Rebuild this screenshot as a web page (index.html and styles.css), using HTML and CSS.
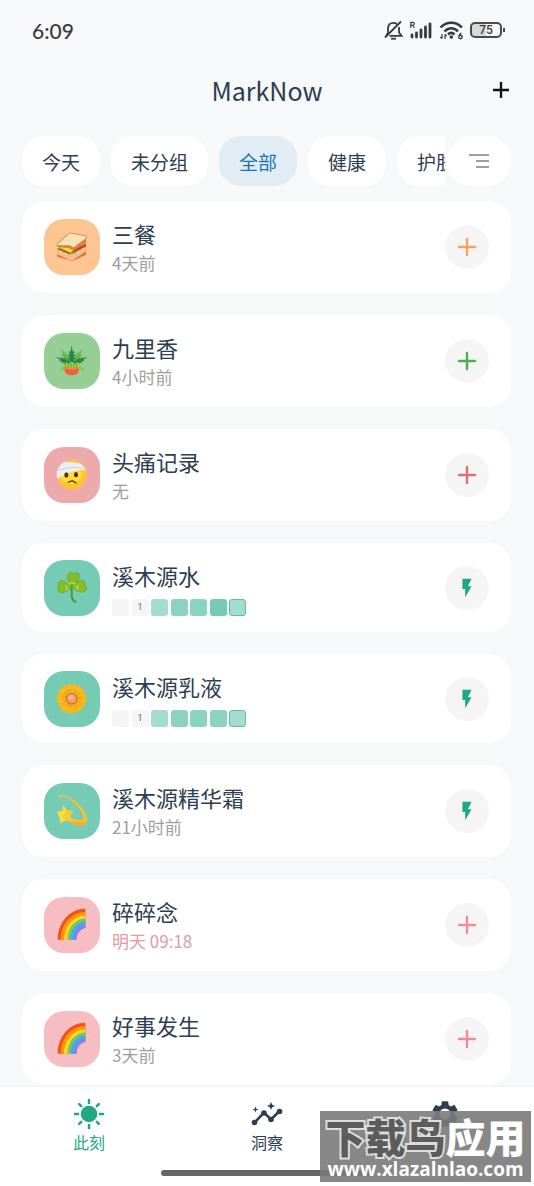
FILE: index.html
```
<!DOCTYPE html>
<html lang="zh-CN">
<head>
    <meta charset="UTF-8">
    <meta name="viewport" content="width=device-width, initial-scale=1">
    <title>MarkNow</title>
    <link rel="stylesheet" href="styles.css">
</head>
<body>
    <!-- shared icons -->
    <svg class="sprite" aria-hidden="true">
        <symbol id="plus" viewBox="0 0 22 22">
            <path d="M11 3v16M3 11h16" stroke="currentColor" stroke-width="2.4" stroke-linecap="round"/>
        </symbol>
        <symbol id="bolt" viewBox="0 0 24 24">
            <path d="M7 2v11h3v9l7-12h-4l4-8z" fill="currentColor"/>
        </symbol>
        <symbol id="rainbow" viewBox="0 0 168 168">
            <path d="M41 128A83 91 0 0 1 124 35v57A32 36 0 0 0 97 128z" fill="#f4511e"/>
            <path d="M50 128A74 82 0 0 1 124 45v47A32 36 0 0 0 97 128z" fill="#ff9800"/>
            <path d="M60 128A64 73 0 0 1 124 55v37A32 36 0 0 0 97 128z" fill="#fdd835"/>
            <path d="M70 128A54 64 0 0 1 124 64v28A32 36 0 0 0 97 128z" fill="#8bc34a"/>
            <path d="M79 128A45 55 0 0 1 124 73v19A32 36 0 0 0 97 128z" fill="#29b6f6"/>
            <path d="M88 128A36 46 0 0 1 124 82v9A32 36 0 0 0 97 128z" fill="#8e7cf0"/>
        </symbol>
    </svg>

    <div class="app">
        <header>
            <div class="status-bar">
                <span class="time">6:09</span>
                <div class="status-icons">
                    <svg width="19" height="20" viewBox="0 0 19 20" fill="none" stroke="#3a3a3a" stroke-width="1.8">
                        <path d="M4 13V8.500C4 5 6 2.800 9.300 2.800c1.500 0 2.600.4 3.500 1.200M15 7v5.500l2.500 3.300H5.500M4 13l-2 2.800M17 1.500L1 17.500"/>
                        <path d="M7 18.700h5"/>
                    </svg>
                    <svg width="24" height="20" viewBox="0 0 24 20">
                        <path d="M1.800 8V2.300h2a1.500 1.500 0 0 1 0 3h-2M3.800 5.300L5.500 8" fill="none" stroke="#3a3a3a" stroke-width="1.200"/>
                        <path d="M3 15v2M7.500 13v4M12 10v7M16.500 7v10M21 4v13" stroke="#3a3a3a" stroke-width="2.800" stroke-linecap="round"/>
                    </svg>
                    <svg width="25" height="20" viewBox="0 0 25 20" fill="none" stroke="#3a3a3a">
                        <path d="M1.500 7.500C7.500 1 17 1 23 7.500M5.500 11.500c4-4.300 9.500-4.300 13.500 0M9 14.500c2-2 4.500-2 6.500 0" stroke-width="2.500"/>
                        <circle cx="12.300" cy="17" r="1.800" fill="#3a3a3a" stroke="none"/>
                        <path d="M3 14v4.500M1.300 17L3 18.700M6 19v-4.500M6 14.500L7.700 16" stroke-width="1.200"/>
                        <path d="M22 13l-2 3" stroke-width="1.400"/>
                        <circle cx="21.500" cy="17" r="1.700" stroke-width="1.400"/>
                    </svg>
                    <div class="battery"><span>75</span></div>
                </div>
            </div>
            <div class="title-bar">
                <h1>MarkNow</h1>
                <button class="add" aria-label="新建">
                    <svg width="18" height="18" viewBox="0 0 18 18"><path d="M9 1v16M1 9h16" stroke="#111" stroke-width="2.300"/></svg>
                </button>
            </div>
            <div class="filters">
                <div class="chips">
                    <button class="chip">今天</button>
                    <button class="chip">未分组</button>
                    <button class="chip active">全部</button>
                    <button class="chip">健康</button>
                    <button class="chip">护肤</button>
                </div>
                <button class="menu" aria-label="分组列表">
                    <svg width="22" height="16" viewBox="0 0 22 16"><path d="M1 2h20M8 8h13M8 14h13" stroke="#9e9e9e" stroke-width="1.800"/></svg>
                </button>
            </div>
        </header>

        <main>
            <article class="card orange">
                <div class="icon">
                    <svg viewBox="0 0 168 168">
                        <path d="M39 106l34 15c5 4 12 4 17 0l36-24v10l-34 16c-7 3-15 3-20-1l-32-9z" fill="#d9772b"/>
                        <path d="M40 99l35 15 52-26v8l-37 22c-6 3-11 3-15 0l-35-12z" fill="#f5b8a0"/>
                        <path d="M37 89l7 6 7 0 8 8 8-2 8 9 9-5 9 1 9-10 8-1 7-8 9-1v-12l-30 12-50-2z" fill="#9bcb35"/>
                        <path d="M42 87l33 13 51-26v8l-35 18-17 4-31-13z" fill="#cc3829"/>
                        <path d="M50 84l30 17 18-15 27-13v-7l-48 14z" fill="#ffdb46"/>
                        <path d="M38 76c5-7 26-25 34-32 3-3 7-3 11-2l42 7c5 2 5 8 1 11l1 12-32 18c-4 5-9 5-13 2-4-4-9-5-14-5l-28-4z" fill="#d8813b"/>
                        <path d="M40 76c6-6 26-23 34-31 2-2 5-2 9-1l41 7c4 2 2 6-1 8L94 82c-3 4-7 4-11 0-5-4-10-3-15-3l-24 0z" fill="#fce2b5"/>
                    </svg>
                </div>
                <div class="info">
                    <h2>三餐</h2>
                    <p>4天前</p>
                </div>
                <button class="action" aria-label="记录三餐"><svg><use href="#plus"/></svg></button>
            </article>

            <article class="card green">
                <div class="icon">
                    <svg viewBox="0 0 168 168">
                        <defs>
                            <path id="frond" d="M83 100L80 88L72 88L78 81L70 76L78 73L71 66L79 64L73 56L80 55L83 36L86 55L93 56L87 64L95 66L88 73L96 76L88 81L94 88L86 88z"/>
                        </defs>
                        <g fill="#65b847">
                            <use href="#frond" transform="rotate(-32 83 100)"/>
                            <use href="#frond" transform="rotate(32 83 100)"/>
                            <path d="M70 92q-18 2-24 25l12-7 14-11zM96 92q20 2 28 25l-13-7-14-11z" fill="#83c955"/>
                        </g>
                        <g fill="#24864e">
                            <use href="#frond" transform="translate(-2 -4) rotate(-62 83 100) translate(16 18) scale(.82)"/>
                            <use href="#frond" transform="translate(2 -4) rotate(62 83 100) translate(14 18) scale(.82)"/>
                            <use href="#frond"/>
                        </g>
                        <path d="M57 98l8-10 9 4 9-6 9 6 10-4 8 10-7 12H62z" fill="#a6cf45"/>
                        <path d="M65 92v13M73 91v16M81 90v17M89 91v16M98 92v14" stroke="#447b33" stroke-width="2"/>
                        <path d="M60 103q23 8 46 0l-3 15q-6 9-20 9t-20-9z" fill="#ef6037"/>
                        <path d="M61 105q22 7 44 0" stroke="#ff8758" stroke-width="3" fill="none"/>
                    </svg>
                </div>
                <div class="info">
                    <h2>九里香</h2>
                    <p>4小时前</p>
                </div>
                <button class="action" aria-label="记录九里香"><svg><use href="#plus"/></svg></button>
            </article>

            <article class="card red">
                <div class="icon">
                    <svg viewBox="0 0 168 168">
                        <circle cx="83" cy="82" r="44" fill="#fdc62b"/>
                        <circle cx="79" cy="76" r="34" fill="#ffdc3c"/>
                        <path d="M38 76q3-20 24-32l32 1q22 4 29 19l1 6Q88 65 41 95q-4-8-3-19z" fill="#eceff1"/>
                        <path d="M40 71q42-15 83-7M61 45q21-5 40 3" stroke="#b7c3c9" stroke-width="2" fill="none"/>
                        <path d="M68 41q24-8 42 8l-17-3z" fill="#fdc62b"/>
                        <ellipse cx="67" cy="84" rx="6" ry="8" fill="#47301f"/>
                        <ellipse cx="96" cy="83" rx="6" ry="8" fill="#47301f"/>
                        <path d="M73 106q12-9 23 2" stroke="#5d3b1c" stroke-width="4" stroke-linecap="round" fill="none"/>
                    </svg>
                </div>
                <div class="info">
                    <h2>头痛记录</h2>
                    <p>无</p>
                </div>
                <button class="action" aria-label="记录头痛"><svg><use href="#plus"/></svg></button>
            </article>

            <article class="card teal heat">
                <div class="icon">
                    <svg viewBox="0 0 168 168">
                        <path d="M82 78q2 16 1 30 2 14 12 17" stroke="#4f962f" stroke-width="6" stroke-linecap="round" fill="none"/>
                        <g fill="#84bd27" stroke="#5ea52d" stroke-width="2">
                            <path d="M84 77C70 62 67 51 73 41c5-7 12-5 15 0 7-6 16-4 18 3 3 11-7 24-22 33z"/>
                            <path d="M82 81C66 65 54 58 46 63c-6 4-4 11-1 14-8 5-7 17 3 20 13 3 25-5 34-16z"/>
                            <path d="M84 81c13-15 22-23 33-19 8 3 9 10 6 13 8 6 5 18-4 20-13 4-27-4-35-14z"/>
                        </g>
                        <path d="M74 73q10-9 20 0M65 77q8 6 1 14M104 75q-8 8-2 14" stroke="#b5d649" stroke-width="5" fill="none"/>
                    </svg>
                </div>
                <div class="info">
                    <h2>溪木源水</h2>
                    <div class="days"><i></i><i>1</i><i class="l1"></i><i class="l2"></i><i class="l2"></i><i class="l3"></i><i class="l1 today"></i></div>
                </div>
                <button class="action" aria-label="完成溪木源水"><svg><use href="#bolt"/></svg></button>
            </article>

            <article class="card teal heat">
                <div class="icon">
                    <svg viewBox="0 0 168 168">
                        <g fill="#fbb912">
                            <path id="petal" d="M83 83L69 48q-2-9 7-10 4 5 7 1 4 4 8-1 8 2 6 10z"/>
                            <use href="#petal" transform="rotate(45 83 83)"/>
                            <use href="#petal" transform="rotate(90 83 83)"/>
                            <use href="#petal" transform="rotate(135 83 83)"/>
                            <use href="#petal" transform="rotate(180 83 83)"/>
                            <use href="#petal" transform="rotate(225 83 83)"/>
                            <use href="#petal" transform="rotate(270 83 83)"/>
                            <use href="#petal" transform="rotate(315 83 83)"/>
                        </g>
                        <circle cx="83" cy="83" r="24" fill="none" stroke="#e9852c" stroke-width="10" stroke-dasharray="2 7"/>
                        <circle cx="83" cy="83" r="16" fill="#f0a16c" stroke="#d66c36" stroke-width="4"/>
                        <circle cx="80" cy="79" r="7" fill="#f7bd8c"/>
                    </svg>
                </div>
                <div class="info">
                    <h2>溪木源乳液</h2>
                    <div class="days"><i></i><i>1</i><i class="l1"></i><i class="l2"></i><i class="l2"></i><i class="l2"></i><i class="l1 today"></i></div>
                </div>
                <button class="action" aria-label="完成溪木源乳液"><svg><use href="#bolt"/></svg></button>
            </article>

            <article class="card teal">
                <div class="icon">
                    <svg viewBox="0 0 168 168">
                        <path d="M46 49C40 33 61 33 83 47c27 17 48 45 46 63-1 20-23 23-46 9l-2-14q31 12 36 3C124 91 93 57 70 45 57 38 48 39 49 48z" fill="#fbc02d"/>
                        <path d="M81 112q28 12 46-1-5 25-45 8z" fill="#ffa914"/>
                        <path d="M58 66l10 16 20 2-10 14 8 19-20-5-18 9-1-18-9-17 18-3z" fill="#fddd39"/>
                        <path d="M68 82l20 2-10 14 8 19-20-5-6-16z" fill="#f9c92d"/>
                    </svg>
                </div>
                <div class="info">
                    <h2>溪木源精华霜</h2>
                    <p>21小时前</p>
                </div>
                <button class="action" aria-label="完成溪木源精华霜"><svg><use href="#bolt"/></svg></button>
            </article>

            <article class="card pink">
                <div class="icon"><svg><use href="#rainbow"/></svg></div>
                <div class="info">
                    <h2>碎碎念</h2>
                    <p class="due">明天 09:18</p>
                </div>
                <button class="action" aria-label="记录碎碎念"><svg><use href="#plus"/></svg></button>
            </article>

            <article class="card pink">
                <div class="icon"><svg><use href="#rainbow"/></svg></div>
                <div class="info">
                    <h2>好事发生</h2>
                    <p>3天前</p>
                </div>
                <button class="action" aria-label="记录好事发生"><svg><use href="#plus"/></svg></button>
            </article>
        </main>

        <nav>
            <a href="#now" class="current">
                <svg width="32" height="32" viewBox="0 0 32 32">
                    <circle cx="16" cy="16" r="8.300" fill="currentColor"/>
                    <path d="M16 2v3M16 27v3M2 16h3M27 16h3M6.200 6.200l2 2M23.800 23.800l2 2M6.200 25.800l2-2M23.800 8.200l2-2" stroke="currentColor" stroke-width="2.500" stroke-linecap="round"/>
                </svg>
                此刻
            </a>
            <a href="#insights">
                <svg width="32" height="32" viewBox="0 0 32 32" fill="currentColor">
                    <path d="M3.500 24.500l9.500-10 7 7 8.500-8.500" fill="none" stroke="currentColor" stroke-width="2.600"/>
                    <circle cx="3.500" cy="24.500" r="2.800"/>
                    <circle cx="13" cy="15" r="2.800"/>
                    <circle cx="20" cy="21.500" r="2.800"/>
                    <circle cx="28.500" cy="13.500" r="2.800"/>
                    <path d="M20 4l1.200 2.800L24 8l-2.800 1.200L20 12l-1.200-2.800L16 8l2.800-1.200zM4.500 8.500l.8 2.200 2.200.8-2.200.8-.8 2.200-.8-2.200-2.200-.8 2.200-.8z"/>
                </svg>
                洞察
            </a>
            <a href="#settings" aria-label="设置">
                <svg width="32" height="32" viewBox="0 0 24 24">
                    <path d="M19.140 12.940c.04-.3.060-.61.060-.94 0-.32-.02-.64-.07-.94l2.030-1.580c.18-.14.230-.41.120-.61l-1.920-3.320c-.12-.22-.37-.29-.59-.22l-2.390.96c-.5-.38-1.030-.7-1.620-.94l-.36-2.540c-.04-.24-.24-.41-.48-.41h-3.840c-.24 0-.43.170-.47.410l-.36 2.540c-.59.240-1.130.570-1.620.940l-2.390-.96c-.22-.08-.47 0-.59.220L2.740 8.870c-.12.210-.08.470.120.610l2.030 1.580c-.05.3-.09.630-.09.940s.02.640.07.940l-2.030 1.580c-.18.140-.23.410-.12.610l1.920 3.320c.12.220.37.290.59.220l2.390-.96c.5.380 1.030.7 1.620.940l.36 2.540c.05.240.24.410.48.410h3.840c.24 0 .44-.17.470-.41l.36-2.540c.59-.24 1.130-.56 1.620-.94l2.390.96c.22.080.47 0 .59-.22l1.920-3.320c.12-.22.070-.47-.12-.61l-2.010-1.580zM12 16.200A4.200 4.200 0 1 1 12 7.800a4.200 4.200 0 0 1 0 8.400z" fill="currentColor"/>
                </svg>
            </a>
            <div class="home-bar"></div>
            <div class="watermark">
                <div class="site"><span>下载鸟</span>应用</div>
                <div class="url">www.xlazalnlao.com</div>
            </div>
        </nav>
    </div>
</body>
</html>
```
FILE: styles.css
```
* { box-sizing: border-box; }
body {
    margin: 0;
    background: #f6f8fa;
    color: #2c3e50;
    font-family: "Noto Sans CJK SC", sans-serif;
}
h1, h2, p { margin: 0; font-weight: 400; }
button { border: 0; padding: 0; font: inherit; color: inherit; cursor: pointer; }
svg { display: block; }
.sprite { position: absolute; width: 0; height: 0; }

.app { display: flex; flex-direction: column; height: 100vh; overflow: hidden; }

/* header */
header { flex: none; }
.status-bar { display: flex; justify-content: space-between; align-items: center; height: 60px; padding: 0 32px; color: #3a3a3a; }
.time { font-family: Lato, sans-serif; font-size: 21px; font-weight: 500; }
.status-icons { display: flex; align-items: center; gap: 6px; }
.battery { position: relative; width: 32px; height: 16px; border: 2px solid #4a4a4a; border-radius: 5px; background: linear-gradient(90deg, #d8d8d8 50%, #f6f8fa 50%); font: 500 12px/12px Roboto, sans-serif; text-align: center; }
.battery::after { content: ""; position: absolute; right: -5px; top: 4px; width: 2px; height: 4px; background: #4a4a4a; }

.title-bar { display: grid; grid-template-columns: 1fr auto 1fr; align-items: center; height: 60px; padding: 0 24px; }
h1 { grid-column: 2; font-size: 25px; line-height: 60px; }
.add { justify-self: end; background: none; }

.filters { display: flex; align-items: center; gap: 2px; padding: 16px 23px 15px 22px; }
.chips { display: flex; flex: 1; gap: 11px; overflow: hidden; }
.chip { flex: none; height: 50px; padding: 0 20px; border-radius: 22px; background: #fff; font-size: 19px; }
.chip.active { background: #e1ecf5; color: #1976b5; }
.menu { display: flex; align-items: center; justify-content: center; width: 64px; height: 50px; border-radius: 24px; background: #fff; }

/* list */
main { flex: 1; min-height: 0; display: flex; flex-direction: column; gap: 22px; padding: 0 23px 0 22px; overflow: hidden; }
.card { flex: none; display: flex; align-items: center; gap: 12px; padding: 18px 22px; border-radius: 22px; background: #fff; }
.card.heat { padding: 17px 22px 16px; }
.icon { width: 56px; height: 56px; border-radius: 20px; }
.icon svg { width: 56px; height: 56px; }
.info { flex: 1; }
h2 { font-size: 22px; line-height: 28px; }
.info p { margin-top: 4px; font-size: 17px; line-height: 24px; color: #9e9e9e; }
.info .due { color: #e29aa3; }

.action { display: flex; align-items: center; justify-content: center; width: 44px; height: 44px; border-radius: 50%; background: #f5f5f5; }
.action svg { width: 22px; height: 22px; }

.orange .icon { background: #fcc591; }
.orange .action { color: #f7a35c; }
.green .icon { background: #95cf95; }
.green .action { color: #4caf50; }
.red .icon { background: #eeaaab; }
.red .action { color: #dd6f75; }
.teal .icon { background: #76cbb5; }
.teal .action { color: #1fa882; }
.pink .icon { background: #f6bdc2; }
.pink .action { color: #ee8c98; }

.days { display: flex; justify-content: space-between; width: 134px; padding-top: 10px; }
.days i { width: 17px; height: 17px; border-radius: 3px; background: #f5f5f5; color: #666; font: 9px/17px Roboto, sans-serif; text-align: center; }
.days .l1 { background: #a4dccd; }
.days .l2 { background: #8bd2bf; }
.days .l3 { background: #76cbb5; }
.days .today { border: 1px solid #5fbfa5; }

/* bottom navigation */
nav { position: relative; flex: none; display: grid; grid-template-columns: repeat(3, 1fr); height: 100px; padding-top: 11px; border-top: 1px solid #f0f1f3; background: #fff; }
nav a { display: flex; flex-direction: column; align-items: center; font-size: 16px; line-height: 24px; color: #2c3e50; text-decoration: none; }
nav .current { color: #1fa882; }
.home-bar { position: absolute; left: 50%; bottom: 10px; width: 212px; height: 6px; margin-left: -106px; border-radius: 3px; background: #666; }

.watermark { position: absolute; right: 3px; bottom: 4px; width: 211px; height: 71px; background: rgba(122, 122, 122, 0.9); color: #fff; text-align: center; white-space: nowrap; }
.site { font-size: 40px; font-weight: 900; line-height: 50px; }
.site span { color: #5c5c5c; -webkit-text-stroke: 4px #ddd; paint-order: stroke fill; }
.url { font: bold 19px/16px "Open Sans", sans-serif; }
```
